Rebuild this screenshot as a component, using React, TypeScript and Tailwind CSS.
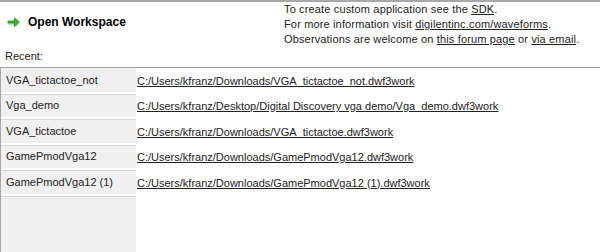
const recent = [
  { name: "VGA_tictactoe_not", path: "C:/Users/kfranz/Downloads/VGA_tictactoe_not.dwf3work" },
  { name: "Vga_demo", path: "C:/Users/kfranz/Desktop/Digital Discovery vga demo/Vga_demo.dwf3work" },
  { name: "VGA_tictactoe", path: "C:/Users/kfranz/Downloads/VGA_tictactoe.dwf3work" },
  { name: "GamePmodVga12", path: "C:/Users/kfranz/Downloads/GamePmodVga12.dwf3work" },
  { name: "GamePmodVga12 (1)", path: "C:/Users/kfranz/Downloads/GamePmodVga12 (1).dwf3work" },
];

function GreenArrow() {
  return (
    <svg width="13" height="12" viewBox="0 0 13 12" className="drop-shadow-[0_1px_1px_rgba(0,0,0,0.35)]">
      <path d="M1 5h6.5V1.8l4.8 4.2-4.8 4.2V7H1z" fill="#2fb82f" stroke="#1c8a1c" strokeWidth="0.6" strokeLinejoin="round" />
    </svg>
  );
}

export default function App() {
  return (
    <div className="w-[600px] h-[252px] bg-white text-[11px] text-[#222] font-['Liberation_Sans',Arial,sans-serif] border-t-2 border-[#a8a8a8] flex flex-col overflow-hidden">
      {/* Header */}
      <div className="flex h-[65px] shrink-0">
        <div className="flex-1 flex flex-col">
          <div className="flex items-center gap-[8px] pl-[7px] pt-[11px]">
            <GreenArrow />
            <span className="text-[12px] font-bold text-black">Open Workspace</span>
          </div>
          <div className="pl-[5px] pt-[18px] leading-[14px]">Recent:</div>
        </div>
        <div className="w-[316px] leading-[15px] tracking-[0.15px]">
          <p>
            To create custom application see the <span className="underline">SDK</span>.
          </p>
          <p>
            For more information visit <span className="underline">digilentinc.com/waveforms</span>.
          </p>
          <p>
            Observations are welcome on <span className="underline">this forum page</span> or{" "}
            <span className="underline">via email</span>.
          </p>
        </div>
      </div>

      {/* Recent list */}
      <div className="flex-1 flex border-t border-[#a0a0a0]">
        <div className="w-[136px] bg-[#f0f0f0] border-l border-[#a8a8a8] flex flex-col">
          {recent.map((r) => (
            <div key={r.name} className="h-[25.5px] flex items-center pl-[5px] border-b-2 border-[#ffffff] shadow-[0_1px_0_#d8d8d8]">
              {r.name}
            </div>
          ))}
        </div>
        <div className="flex-1 flex flex-col">
          {recent.map((r) => (
            <div key={r.path} className="h-[25.5px] flex items-center pl-[1px]">
              <span className="underline">{r.path}</span>
            </div>
          ))}
        </div>
      </div>
    </div>
  );
}
